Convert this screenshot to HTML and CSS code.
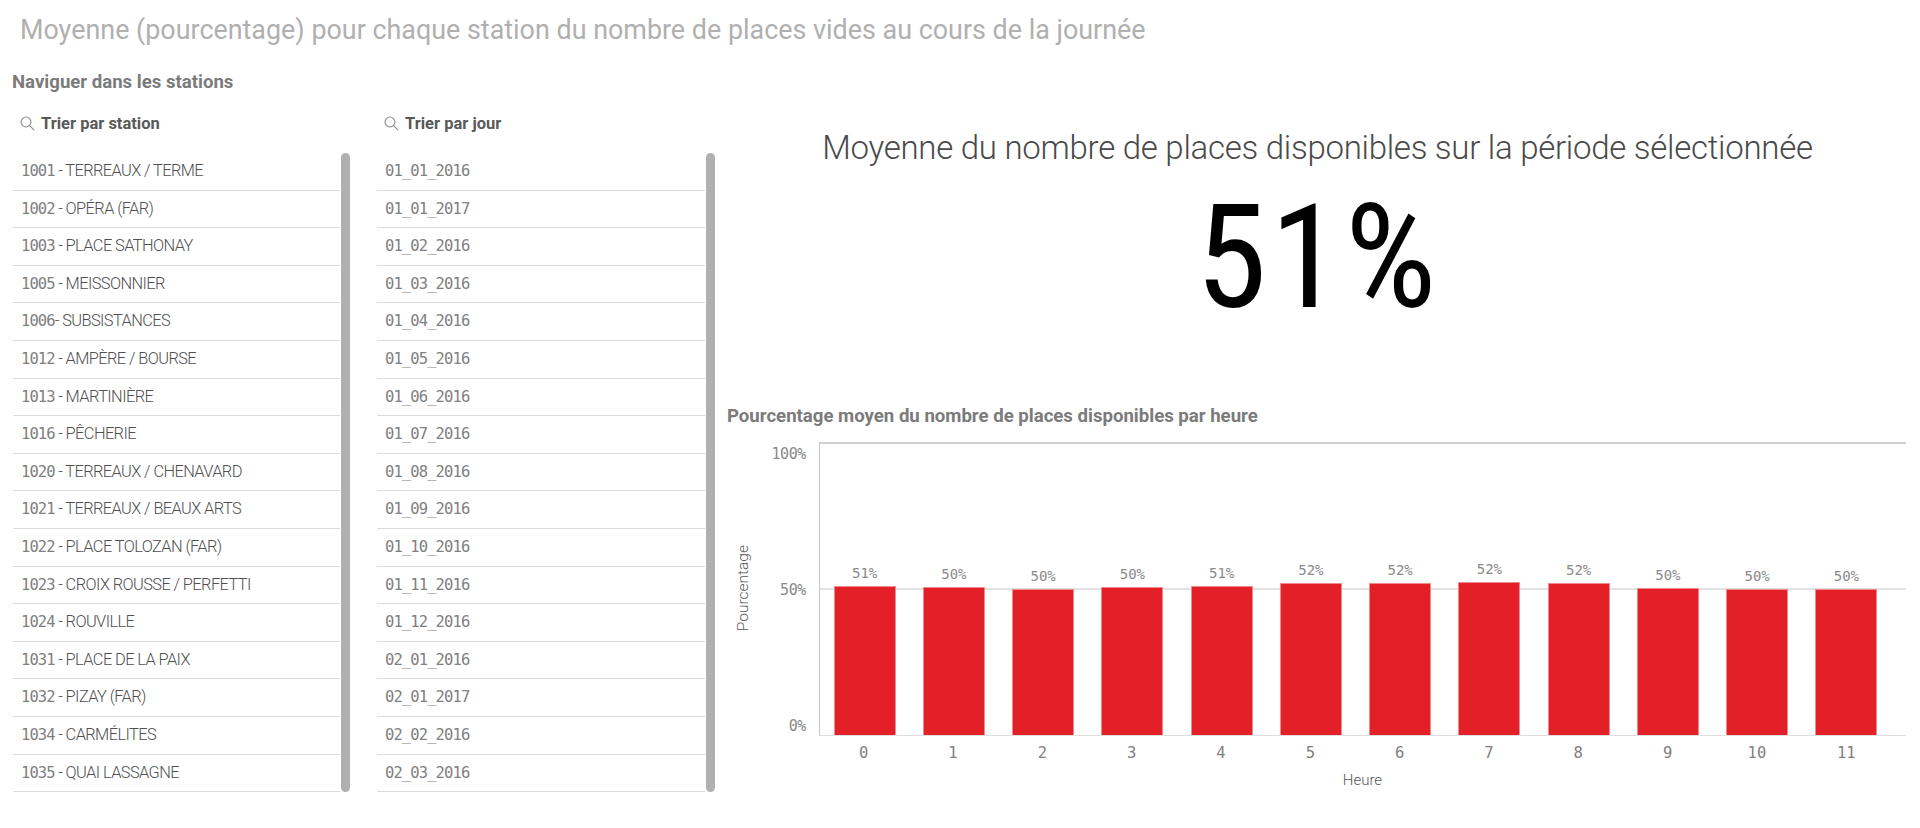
FILE: index.html
```html
<!DOCTYPE html>
<html lang="fr">
<head>
    <meta charset="UTF-8">
    <title>Stations</title>
    <link rel="stylesheet" href="styles.css">
</head>
<body>
    <h1 class="page-title">Moyenne (pourcentage) pour chaque station du nombre de places vides au cours de la journée</h1>

    <div class="page">
        <div class="nav">
            <h2 class="section-title">Naviguer dans les stations</h2>
            <div class="lists">
                <div class="list list-station">
                    <div class="list-head">
                        <svg class="search-icon" viewBox="0 0 14 14"><circle cx="5.6" cy="5.6" r="4.6"/><path d="M9 9l4.2 4.2"/></svg>
                        <span>Trier par station</span>
                    </div>
                    <div class="list-body">
                        <ul class="rows">
                            <li><span class="num">1001</span> - TERREAUX / TERME</li>
                            <li><span class="num">1002</span> - OPÉRA (FAR)</li>
                            <li><span class="num">1003</span> - PLACE SATHONAY</li>
                            <li><span class="num">1005</span> - MEISSONNIER</li>
                            <li><span class="num">1006</span>- SUBSISTANCES</li>
                            <li><span class="num">1012</span> - AMPÈRE / BOURSE</li>
                            <li><span class="num">1013</span> - MARTINIÈRE</li>
                            <li><span class="num">1016</span> - PÊCHERIE</li>
                            <li><span class="num">1020</span> - TERREAUX / CHENAVARD</li>
                            <li><span class="num">1021</span> - TERREAUX / BEAUX ARTS</li>
                            <li><span class="num">1022</span> - PLACE TOLOZAN (FAR)</li>
                            <li><span class="num">1023</span> - CROIX ROUSSE / PERFETTI</li>
                            <li><span class="num">1024</span> - ROUVILLE</li>
                            <li><span class="num">1031</span> - PLACE DE LA PAIX</li>
                            <li><span class="num">1032</span> - PIZAY (FAR)</li>
                            <li><span class="num">1034</span> - CARMÉLITES</li>
                            <li><span class="num">1035</span> - QUAI LASSAGNE</li>
                        </ul>
                        <div class="scrollbar"></div>
                    </div>
                </div>
                <div class="list list-day">
                    <div class="list-head">
                        <svg class="search-icon" viewBox="0 0 14 14"><circle cx="5.6" cy="5.6" r="4.6"/><path d="M9 9l4.2 4.2"/></svg>
                        <span>Trier par jour</span>
                    </div>
                    <div class="list-body">
                        <ul class="rows">
                            <li><span class="num">01_01_2016</span></li>
                            <li><span class="num">01_01_2017</span></li>
                            <li><span class="num">01_02_2016</span></li>
                            <li><span class="num">01_03_2016</span></li>
                            <li><span class="num">01_04_2016</span></li>
                            <li><span class="num">01_05_2016</span></li>
                            <li><span class="num">01_06_2016</span></li>
                            <li><span class="num">01_07_2016</span></li>
                            <li><span class="num">01_08_2016</span></li>
                            <li><span class="num">01_09_2016</span></li>
                            <li><span class="num">01_10_2016</span></li>
                            <li><span class="num">01_11_2016</span></li>
                            <li><span class="num">01_12_2016</span></li>
                            <li><span class="num">02_01_2016</span></li>
                            <li><span class="num">02_01_2017</span></li>
                            <li><span class="num">02_02_2016</span></li>
                            <li><span class="num">02_03_2016</span></li>
                        </ul>
                        <div class="scrollbar"></div>
                    </div>
                </div>
            </div>
        </div>

        <div class="side">
            <div class="kpi">
                <div class="kpi-title">Moyenne du nombre de places disponibles sur la période sélectionnée</div>
                <div class="kpi-value">51%</div>
            </div>

            <h2 class="section-title chart-title">Pourcentage moyen du nombre de places disponibles par heure</h2>
            <div class="chart">
                <div class="y-title"><span>Pourcentage</span></div>
                <div class="y-axis">
                    <span>100%</span>
                    <span>50%</span>
                    <span>0%</span>
                </div>
                <div class="chart-main">
                    <div class="plot">
                        <div class="grid-line"></div>
                        <div class="slot"><span>51%</span><div class="bar" style="height:149px"></div></div>
                        <div class="slot"><span>50%</span><div class="bar" style="height:148px"></div></div>
                        <div class="slot"><span>50%</span><div class="bar" style="height:146px"></div></div>
                        <div class="slot"><span>50%</span><div class="bar" style="height:148px"></div></div>
                        <div class="slot"><span>51%</span><div class="bar" style="height:149px"></div></div>
                        <div class="slot"><span>52%</span><div class="bar" style="height:152px"></div></div>
                        <div class="slot"><span>52%</span><div class="bar" style="height:152px"></div></div>
                        <div class="slot"><span>52%</span><div class="bar" style="height:153px"></div></div>
                        <div class="slot"><span>52%</span><div class="bar" style="height:152px"></div></div>
                        <div class="slot"><span>50%</span><div class="bar" style="height:147px"></div></div>
                        <div class="slot"><span>50%</span><div class="bar" style="height:146px"></div></div>
                        <div class="slot"><span>50%</span><div class="bar" style="height:146px"></div></div>
                    </div>
                    <div class="x-axis">
                        <span>0</span><span>1</span><span>2</span><span>3</span><span>4</span><span>5</span>
                        <span>6</span><span>7</span><span>8</span><span>9</span><span>10</span><span>11</span>
                    </div>
                    <div class="x-title">Heure</div>
                </div>
            </div>
        </div>
    </div>
</body>
</html>
```

FILE: styles.css
```css
body{
    margin: 0;
    background: #fff;
    height: 828px;
    overflow: hidden;
    font-family: "Roboto", sans-serif;
    color: #666;
}
.page-title{
    margin: 0;
    padding: 11px 0 0 20px;
    height: 46px;
    box-sizing: border-box;
    font-size: 26.9px;
    line-height: 38px;
    font-weight: normal;
    color: #b0b0b0;
    white-space: nowrap;
}
.page{
    display: flex;
}
.nav{
    width: 727px;
    flex: none;
}
.section-title{
    margin: 0;
    font-size: 18.6px;
    line-height: 24px;
    font-weight: bold;
    color: #7b7b7b;
}
.nav .section-title{
    padding: 24px 0 0 12px;
}
.lists{
    display: flex;
    gap: 27px;
    padding-left: 13px;
}
.list{
    width: 337px;
}
.list-day{
    width: 338px;
}
.list-head{
    display: flex;
    align-items: center;
    gap: 6px;
    height: 58px;
    padding-left: 7px;
    box-sizing: border-box;
    font-size: 16.5px;
    font-weight: bold;
    color: #595959;
}
.search-icon{
    width: 15px;
    height: 15px;
    fill: none;
    stroke: #8a8a8a;
    stroke-width: 1;
}
.list-body{
    display: flex;
    gap: 1px;
    height: 640px;
    padding-top: 1px;
}
.rows{
    list-style: none;
    margin: 0;
    padding: 0;
    flex: 1;
}
.rows li{
    height: 37.6px;
    box-sizing: border-box;
    padding: 7px 0 0 8px;
    line-height: 22px;
    font-size: 16.4px;
    font-weight: 300;
    letter-spacing: -0.6px;
    color: #505050;
    border-bottom: 1px solid #dcdcdc;
    white-space: nowrap;
}
.num{
    font-family: "DejaVu Sans Mono", monospace;
    font-weight: normal;
    font-size: 15.5px;
    letter-spacing: -0.9px;
    color: #808080;
}
.scrollbar{
    width: 9px;
    height: 639px;
    background: #b0b0b0;
    border-radius: 5px;
}
.side{
    flex: 1;
}
.kpi{
    height: 370px;
    text-align: center;
}
.kpi-title{
    width: 1181px;
    padding-top: 80px;
    font-size: 33px;
    font-weight: 300;
    letter-spacing: -0.27px;
    line-height: 44px;
    color: #4a4a4a;
}
.kpi-value{
    width: 1181px;
    font-stretch: 75%;
    font-size: 145px;
    line-height: 150px;
    letter-spacing: 3px;
    margin-top: 12px;
    color: #000;
}
.chart-title{
    margin-top: -12px;
}
.chart{
    display: flex;
    height: 350px;
    margin-top: 14px;
}
.y-title{
    width: 32px;
    height: 293px;
    display: flex;
    align-items: center;
    justify-content: center;
}
.y-title span{
    writing-mode: vertical-rl;
    transform: rotate(180deg);
    font-size: 15.5px;
    font-weight: 300;
    color: #555;
}
.y-axis{
    width: 60px;
    height: 293px;
    padding: 3px 13px 0 0;
    box-sizing: border-box;
    display: flex;
    flex-direction: column;
    justify-content: space-between;
    align-items: flex-end;
    font-family: "DejaVu Sans Mono", monospace;
    font-size: 15px;
    letter-spacing: -0.4px;
    color: #8a8a8a;
}
.chart-main{
    width: 1087px;
}
.plot{
    position: relative;
    height: 294px;
    padding-right: 15px;
    display: flex;
    border-top: 2px solid #d0d0d0;
    border-left: 1px solid #c4c4c4;
    border-bottom: 1px solid #dedede;
    box-sizing: border-box;
}
.grid-line{
    position: absolute;
    left: 0;
    right: 0;
    top: 144px;
    height: 2px;
    background: #e2e2e2;
}
.slot{
    position: relative;
    flex: 1;
    display: flex;
    flex-direction: column;
    justify-content: flex-end;
    align-items: center;
    gap: 5px;
    font-family: "DejaVu Sans Mono", monospace;
    font-size: 14px;
    color: #8a8a8a;
}
.bar{
    width: 62px;
    box-sizing: border-box;
    background: #e32028;
    border: 1px solid #ee8a8e;
    border-bottom: none;
}
.x-axis{
    display: flex;
    padding-right: 15px;
    margin-top: 8px;
    font-family: "DejaVu Sans Mono", monospace;
    font-size: 15.5px;
    color: #808080;
}
.x-axis span{
    flex: 1;
    text-align: center;
}
.x-title{
    margin-top: 9px;
    text-align: center;
    font-size: 15px;
    font-weight: 300;
    color: #555;
}
```
